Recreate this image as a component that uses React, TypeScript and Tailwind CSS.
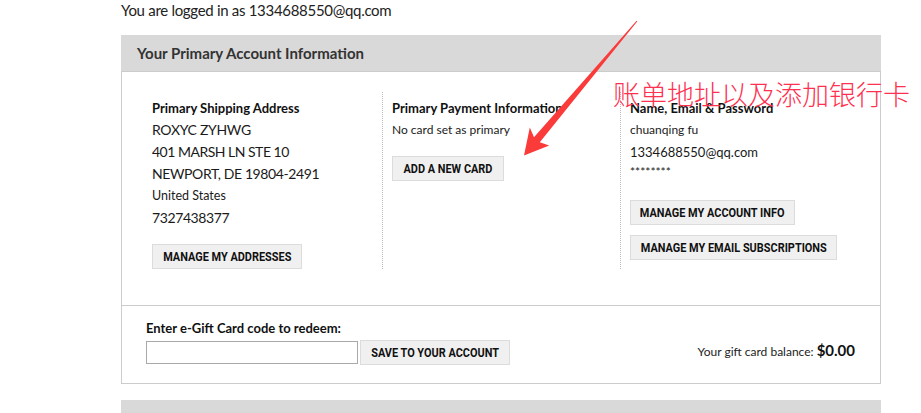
import React from 'react';

const BODY_FONT = { fontFamily: 'Lato, "Open Sans", "Liberation Sans", sans-serif' };
const BTN_FONT = { fontFamily: 'Roboto, "Liberation Sans", sans-serif' };

function Btn({ label, w }: { label: string; w: string }) {
  return (
    <div className={`${w} h-[25px] flex items-center justify-center border border-[#dcdcdc] bg-[#f0f0f0] overflow-hidden`}>
      <span
        className="inline-block whitespace-nowrap text-[13px] leading-none font-bold text-[#111] scale-x-[0.84]"
        style={BTN_FONT}
      >
        {label}
      </span>
    </div>
  );
}

function Arrow() {
  return (
    <svg className="absolute left-0 top-0 pointer-events-none" width="921" height="413" viewBox="0 0 921 413">
      <polygon
        points="637.4,21.3 539.8,142.2 549.2,145.5 524,155.5 529.8,127.6 534.0,137.2 636.6,20.7"
        fill="#fb3a3a"
      />
    </svg>
  );
}

export default function App() {
  return (
    <div className="relative w-[921px] h-[413px] overflow-hidden bg-white text-[#1a1a1a]" style={BODY_FONT}>
      <div className="ml-[121px] w-[760px]">
        <p className="text-[15px] leading-[20px] tracking-[-0.3px] text-[#222]">You are logged in as 1334688550@qq.com</p>

        <div className="mt-[15px]">
          <div className="h-[36px] bg-[#d9d9d9] pl-[16px] flex items-center">
            <h2 className="text-[15px] font-bold text-[#333]">Your Primary Account Information</h2>
          </div>

          <div className="flex border-x border-t border-b border-[#cccccc] pl-[30px] pt-[20px] pb-[36px]">
            <div className="w-[230px] pt-[5px] text-[14px] leading-[22px]">
              <h3 className="text-[13px] font-bold text-[#111]">Primary Shipping Address</h3>
              <p className="tracking-[-0.3px]">ROXYC ZYHWG</p>
              <p className="tracking-[-0.5px]">401 MARSH LN STE 10</p>
              <p className="tracking-[-0.4px]">NEWPORT, DE 19804-2491</p>
              <p className="text-[12.5px]">United States</p>
              <p className="tracking-[-0.4px]">7327438377</p>
              <div className="mt-[15px]">
                <Btn label="MANAGE MY ADDRESSES" w="w-[150px]" />
              </div>
            </div>

            <div className="w-[238px] border-l border-dotted border-[#bbbbbb] pl-[9px] pt-[5px] text-[12px] leading-[22px]">
              <h3 className="text-[13px] font-bold text-[#111]">Primary Payment Information</h3>
              <p>No card set as primary</p>
              <div className="mt-[15px]">
                <Btn label="ADD A NEW CARD" w="w-[112px]" />
              </div>
            </div>

            <div className="flex-1 border-l border-dotted border-[#bbbbbb] pl-[9px] pt-[5px] text-[12px] leading-[22px]">
              <h3 className="text-[13px] font-bold text-[#111]">Name, Email &amp; Password</h3>
              <p>chuanqing fu</p>
              <p className="text-[13px]">1334688550@qq.com</p>
              <p className="text-[12px] leading-[18px]">********</p>
              <div className="mt-[19px] flex flex-col items-start gap-[10px]">
                <Btn label="MANAGE MY ACCOUNT INFO" w="w-[165px]" />
                <Btn label="MANAGE MY EMAIL SUBSCRIPTIONS" w="w-[207px]" />
              </div>
            </div>
          </div>

          <div className="flex items-end justify-between border-x border-b border-[#cccccc] pl-[24px] pr-[25px] pt-[13px] pb-[18px]">
            <div>
              <p className="text-[13px] leading-[18px] font-bold text-[#111]">Enter e-Gift Card code to redeem:</p>
              <div className="mt-[3px] flex items-center gap-[2px]">
                <input className="w-[212px] h-[23px] border border-[#a9a9a9] bg-white" />
                <Btn label="SAVE TO YOUR ACCOUNT" w="w-[150px]" />
              </div>
            </div>
            <p className="text-[12px] leading-[26px] text-[#222]">
              Your gift card balance: <span className="text-[15px] font-bold text-[#111]">$0.00</span>
            </p>
          </div>

          <div className="mt-[16px] h-[20px] bg-[#d9d9d9]" />
        </div>
      </div>

      <Arrow />
      <div
        className="absolute left-[613px] top-[80px] text-[27px] leading-[27px] font-light text-[#ff3050] whitespace-nowrap"
        style={{ fontFamily: '"Noto Sans CJK SC", sans-serif' }}
      >
        账单地址以及添加银行卡
      </div>
    </div>
  );
}
